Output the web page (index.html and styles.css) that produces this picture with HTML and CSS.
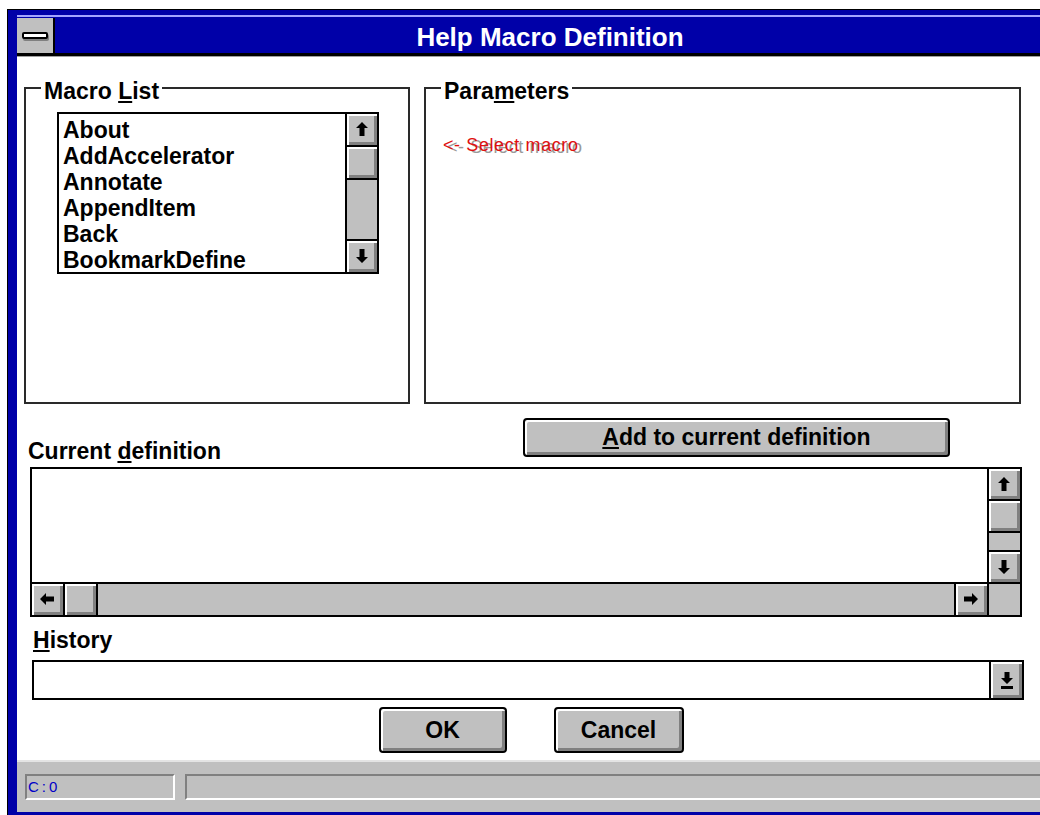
FILE: index.html
```html
<!DOCTYPE html>
<html lang="en">
<head>
<meta charset="utf-8">
<title>Help Macro Definition</title>
<link rel="stylesheet" href="styles.css">
</head>
<body>
<div class="window">
  <div class="titlebar">
    <div class="sysmenu"><span class="sysmenu-bar"></span></div>
    <div class="title">Help Macro Definition</div>
  </div>

  <div class="client">
    <div class="groups">
      <section class="group">
        <div class="group-title">Macro <u>L</u>ist</div>
        <div class="listbox">
          <ul class="list-items">
            <li>About</li>
            <li>AddAccelerator</li>
            <li>Annotate</li>
            <li>AppendItem</li>
            <li>Back</li>
            <li>BookmarkDefine</li>
          </ul>
          <div class="vscroll">
            <div class="sb-btn"><svg width="12" height="14" viewBox="0 0 12 14"><path d="M6 0L12 6H8.5V14H3.5V6H0Z"/></svg></div>
            <div class="sb-thumb"></div>
            <div class="sb-track"></div>
            <div class="sb-btn"><svg width="12" height="14" viewBox="0 0 12 14"><path d="M3.5 0H8.5V8H12L6 14L0 8H3.5Z"/></svg></div>
          </div>
        </div>
      </section>

      <section class="group">
        <div class="group-title">Para<u>m</u>eters</div>
        <p class="hint">&lt;- Select macro</p>
      </section>
    </div>

    <div class="def-head">
      <div class="def-label">Current <u>d</u>efinition</div>
      <button class="btn btn-add" type="button"><u>A</u>dd to current definition</button>
    </div>

    <div class="editbox">
      <div class="edit-text"></div>
      <div class="vscroll">
        <div class="sb-btn"><svg width="12" height="14" viewBox="0 0 12 14"><path d="M6 0L12 6H8.5V14H3.5V6H0Z"/></svg></div>
        <div class="sb-thumb"></div>
        <div class="sb-track"></div>
        <div class="sb-btn"><svg width="12" height="14" viewBox="0 0 12 14"><path d="M3.5 0H8.5V8H12L6 14L0 8H3.5Z"/></svg></div>
      </div>
      <div class="hscroll">
        <div class="sb-btn"><svg width="14" height="12" viewBox="0 0 14 12"><path d="M0 6L6 0V3.5H14V8.5H6V12Z"/></svg></div>
        <div class="sb-thumb"></div>
        <div class="sb-track"></div>
        <div class="sb-btn"><svg width="14" height="12" viewBox="0 0 14 12"><path d="M14 6L8 0V3.5H0V8.5H8V12Z"/></svg></div>
      </div>
      <div class="sb-corner"></div>
    </div>

    <div class="field-label"><u>H</u>istory</div>
    <div class="combo">
      <div class="combo-text"></div>
      <div class="combo-btn"><svg width="14" height="17" viewBox="0 0 14 17"><path d="M4.5 0H9.5V6H13L7 12L1 6H4.5Z"/><rect x="1" y="14" width="12" height="3"/></svg></div>
    </div>

    <div class="actions">
      <button class="btn btn-dlg" type="button">OK</button>
      <button class="btn btn-dlg btn-cancel" type="button">Cancel</button>
    </div>
  </div>

  <div class="statusbar">
    <div class="status-field status-pos">C:0</div>
    <div class="status-field status-msg"></div>
  </div>
</div>
</body>
</html>
```

FILE: styles.css
```css
html, body {
  margin: 0;
  overflow: hidden;
}

body {
  width: 1040px;
  height: 815px;
  box-sizing: border-box;
  padding: 9px 0 0 7px;
  background: #fff;
  color: #000;
  font-family: "Liberation Sans", Arial, sans-serif;
  font-weight: 700;
  font-size: 23px;
}

u {
  text-decoration-thickness: 2px;
  text-underline-offset: 2px;
}

/* window frame */
.window {
  width: 1028px;
  border: 1px solid #000;
  background: #0000a8;
  padding: 5px 9px 9px 9px;
}

.titlebar {
  display: flex;
  height: 35px;
  border-top: 2px solid #a4a4ff;
  padding-top: 1px;
  border-bottom: 3px solid #000;
  background: #0000a8;
}

.sysmenu {
  width: 36px;
  background: #c0c0c0;
  border-right: 2px solid #000;
  display: flex;
  align-items: center;
  justify-content: center;
}

.sysmenu-bar {
  width: 22px;
  height: 3px;
  border: 2px solid #000;
  border-radius: 2px;
  background: #fff;
  box-shadow: 1px 2px 0 #808080;
}

.title {
  flex: 1;
  padding-top: 3px;
  text-align: center;
  color: #fff;
  font-size: 26px;
  line-height: 32px;
}

/* dialog body */
.client {
  background: #fff;
  border-top: 1px solid #a0a0a0;
  padding: 0 24px 7px 7px;
}

.groups {
  display: grid;
  grid-template-columns: 386px 1fr;
  column-gap: 14px;
  margin-top: 30px;
}

.group {
  height: 317px;
  box-sizing: border-box;
  border: 2px solid #2a2a2a;
}

.group-title {
  width: max-content;
  margin: -10px 0 0 15px;
  padding: 0 3px;
  background: #fff;
  line-height: 24px;
}

.listbox {
  display: flex;
  width: 322px;
  height: 162px;
  box-sizing: border-box;
  margin: 9px 0 0 31px;
  border: 2px solid #000;
  background: #fff;
}

.list-items {
  flex: 1;
  margin: 0;
  padding: 3px 0 0 4px;
  list-style: none;
  line-height: 26px;
  overflow: hidden;
  white-space: nowrap;
}

/* scrollbars */
.vscroll {
  display: flex;
  flex-direction: column;
  gap: 2px;
  background: #000;
}

.listbox .vscroll {
  width: 30px;
  padding-left: 2px;
}

.hscroll {
  display: flex;
  gap: 2px;
  background: #000;
}

.sb-btn,
.sb-thumb {
  flex: 0 0 31px;
  background: #c0c0c0;
  box-shadow: inset 2px 2px 0 #fff, inset -3px -3px 0 #808080;
}

.editbox .vscroll .sb-btn,
.editbox .vscroll .sb-thumb {
  flex-basis: 30px;
}

.sb-btn {
  display: flex;
  align-items: center;
  justify-content: center;
  padding: 0 1px 1px 0;
  box-sizing: border-box;
}

.sb-track {
  flex: 1;
  background: #c0c0c0;
}

.sb-corner {
  background: #c0c0c0;
}

.hint {
  margin: 32px 0 0 17px;
  font-weight: 400;
  font-size: 18px;
  line-height: 20px;
  letter-spacing: 0.6px;
  color: #e01010;
  text-shadow: 4px 2px 0 #9a9a9a;
}

/* current definition */
.def-head {
  display: flex;
  align-items: flex-start;
  height: 49px;
  margin-top: 14px;
}

.def-label {
  align-self: flex-end;
  margin: 0 0 3px 4px;
  line-height: 26px;
}

.btn {
  font: inherit;
  color: #000;
  background: #c0c0c0;
  border: 2px solid #000;
  border-radius: 4px;
  box-shadow: inset 2px 2px 0 #fff, inset -3px -3px 0 #808080;
  padding: 0;
}

.btn-add {
  width: 427px;
  height: 39px;
  margin-left: auto;
  margin-right: 71px;
}

.editbox {
  display: grid;
  grid-template-columns: 1fr 31px;
  grid-template-rows: 1fr 31px;
  gap: 2px;
  height: 150px;
  box-sizing: border-box;
  margin: 0 -1px 0 6px;
  border: 2px solid #000;
  background: #000;
}

.edit-text {
  background: #fff;
}

/* history */
.field-label {
  margin: 10px 0 0 9px;
  line-height: 26px;
}

.combo {
  display: flex;
  height: 40px;
  box-sizing: border-box;
  margin: 7px -3px 0 8px;
  border: 2px solid #000;
  background: #fff;
}

.combo-text {
  flex: 1;
}

.combo-btn {
  width: 31px;
  border-left: 2px solid #000;
  background: #c0c0c0;
  box-shadow: inset 2px 2px 0 #fff, inset -3px -3px 0 #808080;
  display: flex;
  align-items: center;
  justify-content: center;
}

.actions {
  display: flex;
  justify-content: center;
  gap: 47px;
  margin: 7px -24px 0 -7px;
}

.btn-dlg {
  width: 128px;
  height: 46px;
}

.btn-cancel {
  width: 130px;
}

/* status bar */
.statusbar {
  display: flex;
  align-items: center;
  gap: 10px;
  height: 50px;
  padding-left: 8px;
  background: #c0c0c0;
  border-top: 2px solid #e4e4e4;
}

.status-field {
  height: 26px;
  box-sizing: border-box;
  border: 2px solid;
  border-color: #808080 #fff #fff #808080;
}

.status-pos {
  width: 150px;
  padding-left: 1px;
  font-weight: 400;
  font-size: 15px;
  line-height: 22px;
  letter-spacing: 3px;
  color: #0000c8;
}

.status-msg {
  flex: 1;
  margin-right: 2px;
}
```
